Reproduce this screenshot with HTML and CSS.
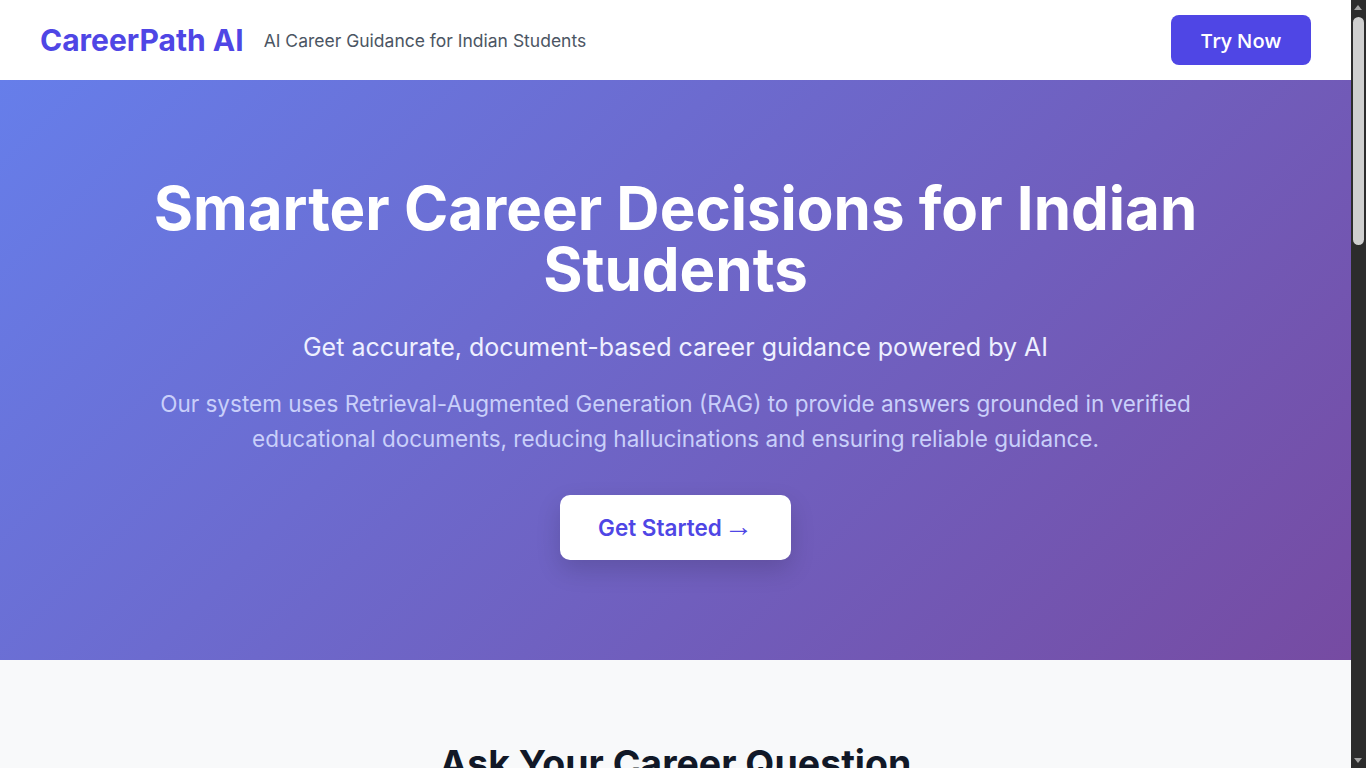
FILE: index.html
```html
<!DOCTYPE html>
<html lang="en">
<head>
<meta charset="utf-8">
<title>CareerPath AI</title>
<link rel="stylesheet" href="styles.css">
</head>
<body>
<div class="page">
<header class="topbar">
  <div class="brand">
    <span class="logo">CareerPath AI</span>
    <span class="tagline">AI Career Guidance for Indian Students</span>
  </div>
  <button class="try-btn">Try Now</button>
</header>

<section class="hero">
  <h1 class="hero-title">Smarter Career Decisions for Indian Students</h1>
  <p class="hero-sub">Get accurate, document-based career guidance powered by AI</p>
  <p class="hero-desc">Our system uses Retrieval-Augmented Generation (RAG) to provide answers grounded in verified educational documents, reducing hallucinations and ensuring reliable guidance.</p>
  <a class="start-btn" href="#ask">Get Started<span class="arrow">→</span></a>
</section>

<section class="ask" id="ask">
  <h2 class="section-title">Ask Your Career Question</h2>
  <div class="ask-card">
    <label class="field-label">Your question</label>
    <textarea class="field" rows="6" placeholder="e.g. What are the career options after 12th science?"></textarea>
    <button class="submit-btn">Get Guidance</button>
  </div>
</section>

<section class="features">
  <h2 class="section-title">Why CareerPath AI?</h2>
  <div class="feature-grid">
    <div class="feature"><h3>Verified Sources</h3><p>Answers are grounded in official educational documents.</p></div>
    <div class="feature"><h3>Indian Context</h3><p>Guidance tailored to Indian exams, colleges and careers.</p></div>
    <div class="feature"><h3>Fewer Hallucinations</h3><p>RAG keeps responses accurate and reliable.</p></div>
  </div>
</section>

<section class="how">
  <h2 class="section-title">How It Works</h2>
  <div class="feature-grid">
    <div class="feature"><h3>1. Ask</h3><p>Type your career question.</p></div>
    <div class="feature"><h3>2. Retrieve</h3><p>Relevant documents are found.</p></div>
    <div class="feature"><h3>3. Answer</h3><p>AI generates grounded guidance.</p></div>
  </div>
</section>

<footer class="footer">© 2024 CareerPath AI. All rights reserved.</footer>
</div>

<div class="scrollbar" aria-hidden="true">
  <span class="sb-arrow sb-up"></span>
  <span class="sb-thumb"></span>
  <span class="sb-arrow sb-down"></span>
</div>
</body>
</html>
```

FILE: styles.css
```css
* { box-sizing: border-box; }
html, body { margin: 0; padding: 0; }
body {
  background: #f8f9fa;
  font-family: Inter, "Noto Sans", sans-serif;
  color: #1f2937;
}
.page {
  margin-right: 15px;
  background: #f8f9fa;
}
.scrollbar {
  position: fixed;
  top: 0;
  right: 0;
  width: 15px;
  height: 100vh;
  background: #2c2c2c;
}
.sb-arrow {
  position: absolute;
  left: 3px;
  width: 0;
  height: 0;
  border-left: 4.5px solid transparent;
  border-right: 4.5px solid transparent;
}
.sb-up { top: 5px; border-bottom: 5px solid #a3a3a3; }
.sb-down { bottom: 5px; border-top: 5px solid #a3a3a3; }
.sb-thumb {
  position: absolute;
  left: 2px;
  top: 17px;
  width: 11px;
  height: 228px;
  border-radius: 6px;
  background: #cfcfcf;
}
.topbar {
  height: 80px;
  background: #ffffff;
  display: flex;
  align-items: center;
  justify-content: space-between;
  padding: 0 40px;
}
.brand { display: flex; align-items: center; gap: 20px; }
.logo {
  font-size: 30px;
  font-weight: 700;
  color: #4f46e5;
}
.tagline {
  font-size: 17.5px;
  color: #4b5563;
}
.try-btn {
  width: 140px;
  height: 50px;
  border: none;
  border-radius: 8px;
  background: #4f46e5;
  color: #ffffff;
  font-family: "Open Sans", sans-serif;
  font-size: 20px;
  font-weight: 600;
}
.hero {
  height: 580px;
  background: linear-gradient(135deg, #667eea 0%, #764ba2 100%);
  color: #ffffff;
  text-align: center;
  padding: 98px 40px 100px;
  display: flex;
  flex-direction: column;
  align-items: center;
}
.hero-title {
  margin: 0 0 29px;
  font-size: 60px;
  line-height: 61px;
  font-weight: 700;
  max-width: 1150px;
}
.hero-sub {
  margin: 0 0 20px;
  font-size: 25px;
  line-height: 37px;
  color: #eef0ff;
}
.hero-desc {
  margin: 0 0 39px;
  font-size: 22.5px;
  line-height: 35px;
  max-width: 1090px;
  color: #c9cffa;
}
.start-btn {
  display: inline-flex;
  align-items: center;
  justify-content: center;
  width: 231px;
  height: 65px;
  background: #ffffff;
  color: #4f46e5;
  border-radius: 10px;
  font-size: 22.5px;
  font-weight: 600;
  text-decoration: none;
  box-shadow: 0 10px 25px rgba(0,0,0,0.15);
}
.arrow {
  margin-left: 2px;
  font-family: "Liberation Sans", sans-serif;
  font-weight: 400;
  font-size: 29px;
  line-height: 1;
  position: relative;
  top: -1px;
}
.ask, .features, .how {
  padding: 80px 40px;
  display: flex;
  flex-direction: column;
  align-items: center;
}
.section-title {
  margin: 0 0 40px;
  font-size: 37.5px;
  line-height: 48px;
  font-weight: 700;
  color: #111827;
}
.ask-card {
  width: 800px;
  background: #ffffff;
  border-radius: 12px;
  padding: 32px;
  display: flex;
  flex-direction: column;
  gap: 16px;
  box-shadow: 0 4px 16px rgba(0,0,0,0.06);
}
.field-label { font-weight: 600; }
.field {
  font-family: inherit;
  font-size: 16px;
  padding: 12px;
  border: 1px solid #d1d5db;
  border-radius: 8px;
  resize: none;
}
.submit-btn {
  align-self: flex-start;
  padding: 14px 28px;
  border: none;
  border-radius: 8px;
  background: #4f46e5;
  color: #fff;
  font-size: 18px;
  font-weight: 600;
}
.features { background: #ffffff; }
.feature-grid {
  display: grid;
  grid-template-columns: repeat(3, 320px);
  gap: 32px;
}
.feature {
  background: #ffffff;
  border-radius: 12px;
  padding: 32px;
  min-height: 200px;
  box-shadow: 0 4px 16px rgba(0,0,0,0.06);
}
.feature h3 { margin: 0 0 12px; font-size: 22px; color: #4f46e5; }
.feature p { margin: 0; font-size: 16px; line-height: 1.6; color: #4b5563; }
.footer {
  padding: 40px;
  text-align: center;
  background: #111827;
  color: #9ca3af;
  font-size: 14px;
}
```
